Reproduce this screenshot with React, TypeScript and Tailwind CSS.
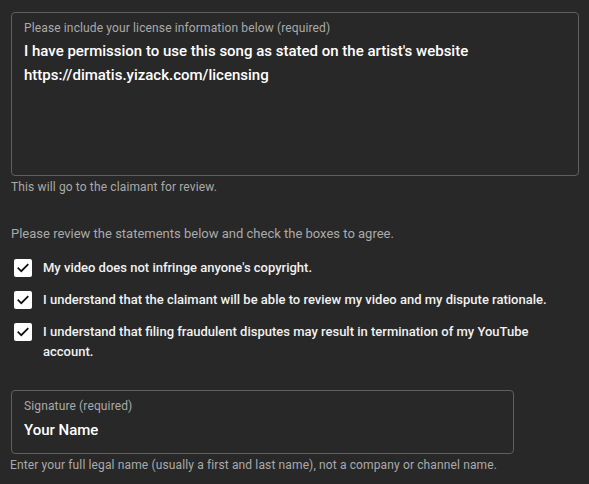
import React from "react";

const statements = [
  "My video does not infringe anyone's copyright.",
  "I understand that the claimant will be able to review my video and my dispute rationale.",
  "I understand that filing fraudulent disputes may result in termination of my YouTube account.",
];

const CheckBox = () => (
  <div className="w-[18px] h-[18px] mt-[1px] shrink-0 rounded-[2px] bg-white flex items-center justify-center">
    <svg width="14" height="14" viewBox="0 0 24 24" fill="none">
      <path
        d="M4 12.5l5 5L20 6.5"
        stroke="#0f0f0f"
        strokeWidth="3"
        strokeLinecap="square"
      />
    </svg>
  </div>
);

export default function App() {
  return (
    <div className="w-[589px] h-[484px] bg-[#282828] pt-[12px] font-['Roboto',sans-serif] overflow-hidden">
      <div className="ml-[11px] w-[568px] h-[164px] border border-[#5f5f5f] rounded-[4px] px-[12px] pt-[7px]">
        <div className="text-[12px] leading-[16px] tracking-[0.13px] text-[#aaaaaa]">
          Please include your license information below (required)
        </div>
        <div className="mt-[3px] text-[15px] leading-[24px] font-medium text-white">
          I have permission to use this song as stated on the artist's website
          <br />
          https://dimatis.yizack.com/licensing
        </div>
      </div>
      <p className="ml-[11px] mt-[3px] text-[12px] leading-[16px] tracking-[0.13px] text-[#aaaaaa]">
        This will go to the claimant for review.
      </p>

      <p className="ml-[11px] mt-[30px] text-[13px] leading-[18px] text-[#aaaaaa]">
        Please review the statements below and check the boxes to agree.
      </p>

      <div className="mt-[15px] ml-[14px] mr-[40px] flex flex-col gap-[12px]">
        {statements.map((s) => (
          <div key={s} className="flex gap-[11px]">
            <CheckBox />
            <span className="text-[13px] leading-[20px] font-medium text-[#f1f1f1]">
              {s}
            </span>
          </div>
        ))}
      </div>

      <div className="mt-[28px] ml-[11px] w-[503px] h-[64px] border border-[#5f5f5f] rounded-[4px] px-[12px] pt-[7px]">
        <div className="text-[12px] leading-[16px] tracking-[0.13px] text-[#aaaaaa]">
          Signature (required)
        </div>
        <div className="mt-[4px] text-[15px] leading-[24px] font-medium text-white">
          Your Name
        </div>
      </div>
      <p className="ml-[10px] mt-[3px] text-[12px] leading-[16px] tracking-[0.13px] text-[#aaaaaa]">
        Enter your full legal name (usually a first and last name), not a company or channel name.
      </p>
    </div>
  );
}
